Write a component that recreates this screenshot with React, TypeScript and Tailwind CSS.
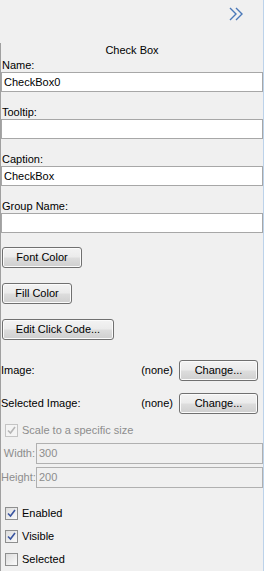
import React from "react"

const font = { fontFamily: '"Liberation Sans", Arial, sans-serif' }

function Field({ label, value }: { label: string; value?: string }) {
  return (
    <div className="flex flex-col">
      <div className="h-[13px] leading-[13px] pl-[1px] text-black">{label}</div>
      <div className="h-[20px] bg-white border border-[#a7a7a7] pl-[2px] leading-[18px] text-black">{value}</div>
    </div>
  )
}

function WinButton({ label, w }: { label: string; w: string }) {
  return (
    <div
      className={`${w} h-[21px] shrink-0 rounded-[3px] border border-[#707070] bg-[linear-gradient(#f3f3f3_0%,#ebebeb_48%,#dddddd_52%,#cfcfcf_100%)] shadow-[inset_0_0_0_1px_#fbfbfb] flex items-center justify-center text-black`}
    >
      {label}
    </div>
  )
}

function CheckBox({ checked, disabled }: { checked: boolean; disabled?: boolean }) {
  return (
    <div
      className={`w-[13px] h-[13px] shrink-0 border ${
        disabled ? "border-[#c4c4c4] bg-[#f4f4f4]" : "border-[#8e8f8f] bg-[linear-gradient(135deg,#dcdcdc,#fbfbfb)]"
      } flex items-center justify-center`}
    >
      {checked && (
        <svg width="9" height="9" viewBox="0 0 9 9">
          <path
            d="M1 4.5 L3.5 7 L8 1"
            fill="none"
            stroke={disabled ? "#b5b5b5" : "#3a55a0"}
            strokeWidth="1.6"
          />
        </svg>
      )}
    </div>
  )
}

function CheckRow({ label, checked, disabled }: { label: string; checked: boolean; disabled?: boolean }) {
  return (
    <div className="flex items-center h-[13px] pl-[4px] gap-[4px]">
      <CheckBox checked={checked} disabled={disabled} />
      <span className={disabled ? "text-[#8d8d8d]" : "text-black"}>{label}</span>
    </div>
  )
}

function SizeRow({ label, value }: { label: string; value: string }) {
  return (
    <div className="flex items-center h-[21px]">
      <span className="w-[34px] shrink-0 text-right text-[#8d8d8d] whitespace-nowrap">{label}</span>
      <div className="ml-[1px] flex-1 h-[21px] border border-[#b0b0b0] bg-[#f0f0f0] pl-[2px] leading-[19px] text-[#8d8d8d]">
        {value}
      </div>
    </div>
  )
}

function ImageRow({ label }: { label: string }) {
  return (
    <div className="flex items-center h-[21px] pr-[5px]">
      <span className="flex-1 text-black">{label}</span>
      <span className="text-black">(none)</span>
      <div className="ml-[6px]">
        <WinButton label="Change..." w="w-[79px]" />
      </div>
    </div>
  )
}

export default function App() {
  return (
    <div
      style={font}
      className="w-[264px] h-[571px] bg-[#f0f0f0] border-r border-[#bcd2ea] flex flex-col text-[11px] overflow-hidden"
    >
      {/* header */}
      <div className="h-[43px] shrink-0 flex justify-end pr-[20px] pt-[7px]">
        <svg width="14" height="14" viewBox="0 0 14 14">
          <path d="M1 1 L7 7 L1 13 M7 1 L13 7 L7 13" fill="none" stroke="#4a78b8" strokeWidth="1.4" />
        </svg>
      </div>

      {/* property panel */}
      <div className="flex-1 border-l border-[#a0a0a0] flex flex-col">
        <div className="h-[13px] mt-[1px] leading-[13px] text-center text-black">Check Box</div>

        <div className="mt-[2px] flex flex-col gap-[14px]">
          <Field label="Name:" value="CheckBox0" />
          <Field label="Tooltip:" />
          <Field label="Caption:" value="CheckBox" />
          <Field label="Group Name:" />
        </div>

        <div className="mt-[14px] pl-[1px] flex flex-col gap-[15px]">
          <WinButton label="Font Color" w="w-[80px]" />
          <WinButton label="Fill Color" w="w-[70px]" />
          <WinButton label="Edit Click Code..." w="w-[112px]" />
        </div>

        <div className="mt-[20px] flex flex-col gap-[12px]">
          <ImageRow label="Image:" />
          <ImageRow label="Selected Image:" />
        </div>

        <div className="mt-[10px]">
          <CheckRow label="Scale to a specific size" checked disabled />
        </div>

        <div className="mt-[6px] flex flex-col gap-[3px]">
          <SizeRow label="Width:" value="300" />
          <SizeRow label="Height:" value="200" />
        </div>

        <div className="mt-[19px] flex flex-col gap-[10px]">
          <CheckRow label="Enabled" checked />
          <CheckRow label="Visible" checked />
          <CheckRow label="Selected" checked={false} />
        </div>
      </div>
    </div>
  )
}
